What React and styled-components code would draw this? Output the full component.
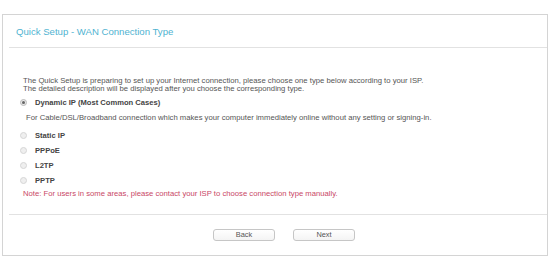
import React, { useState } from 'react';
import styled, { createGlobalStyle } from 'styled-components';

const GlobalStyle = createGlobalStyle`
  html, body {
    margin: 0;
    padding: 0;
    background: #fff;
  }
  body {
    font-family: "Liberation Sans", Arial, sans-serif;
  }
`;

const Page = styled.div`
  width: 554px;
  height: 261px;
  padding: 14px 6px 0 2px;
  box-sizing: border-box;
`;

const Panel = styled.div`
  height: 242px;
  border: 1px solid #d4d4d4;
  box-sizing: border-box;
  display: flex;
  flex-direction: column;
  background: #fff;
`;

const Header = styled.div`
  height: 32px;
  margin-left: 6px;
  padding-left: 7px;
  border-bottom: 1px solid #e2e2e2;
  display: flex;
  align-items: center;
  font-size: 9.6px;
  color: #4fb3d1;
`;

const Body = styled.div`
  flex: 1;
  padding: 29px 0 0 14px;
  color: #555;
  font-size: 7.7px;
  margin-left: 6px;
  border-bottom: 1px solid #e2e2e2;
`;

const Intro = styled.p`
  margin: 0 0 2px;
  line-height: 7.5px;
`;

const Option = styled.label`
  display: flex;
  align-items: center;
  height: ${({ tall }) => (tall ? 16 : 15)}px;
  margin-left: -3px;
  font-weight: bold;
  color: #444;
  font-size: 7.6px;
  cursor: pointer;
`;

const Radio = styled.span`
  width: 7px;
  height: 7px;
  border-radius: 50%;
  margin-right: 8px;
  box-sizing: border-box;
  background: ${({ checked }) => (checked ? '#e8e8e8' : '#efefef')};
  border: 1px solid ${({ checked }) => (checked ? '#bbb' : '#d6d6d6')};
  display: flex;
  align-items: center;
  justify-content: center;

  &::after {
    content: '';
    width: 3px;
    height: 3px;
    border-radius: 50%;
    background: ${({ checked }) => (checked ? '#666' : 'transparent')};
  }
`;

const Description = styled.div`
  margin: 0 0 3.5px 3px;
  height: 14px;
  display: flex;
  align-items: center;
`;

const Note = styled.div`
  color: #c94766;
  margin-top: 2.5px;
  line-height: 8px;
`;

const Footer = styled.div`
  height: 40px;
  display: flex;
  align-items: center;
  justify-content: center;
  gap: 18px;
  padding-left: 18px;
`;

const Button = styled.button`
  width: 62px;
  height: 12px;
  padding: 0;
  border: 1px solid #c6c6c6;
  border-radius: 3px;
  background: linear-gradient(#fff, #f4f4f4);
  font-family: "Liberation Sans", Arial, sans-serif;
  font-size: 7.4px;
  color: #555;
  line-height: 10px;
  cursor: pointer;
`;

const types = [
  { id: 'dynamic', label: 'Dynamic IP (Most Common Cases)' },
  { id: 'static', label: 'Static IP' },
  { id: 'pppoe', label: 'PPPoE' },
  { id: 'l2tp', label: 'L2TP' },
  { id: 'pptp', label: 'PPTP' },
];

export default function App() {
  const [selected, setSelected] = useState('dynamic');

  return (
    <>
      <GlobalStyle />
      <Page>
        <Panel>
          <Header>Quick Setup - WAN Connection Type</Header>
          <Body>
            <Intro>
              The Quick Setup is preparing to set up your Internet connection, please choose one type below according to your ISP.
              <br />
              The detailed description will be displayed after you choose the corresponding type.
            </Intro>
            {types.map(t => (
              <React.Fragment key={t.id}>
                <Option tall={t.id === 'dynamic'} onClick={() => setSelected(t.id)}>
                  <Radio checked={selected === t.id} />
                  {t.label}
                </Option>
                {t.id === 'dynamic' && selected === 'dynamic' && (
                  <Description>
                    For Cable/DSL/Broadband connection which makes your computer immediately online without any setting or signing-in.
                  </Description>
                )}
              </React.Fragment>
            ))}
            <Note>Note: For users in some areas, please contact your ISP to choose connection type manually.</Note>
          </Body>
          <Footer>
            <Button>Back</Button>
            <Button>Next</Button>
          </Footer>
        </Panel>
      </Page>
    </>
  );
}
